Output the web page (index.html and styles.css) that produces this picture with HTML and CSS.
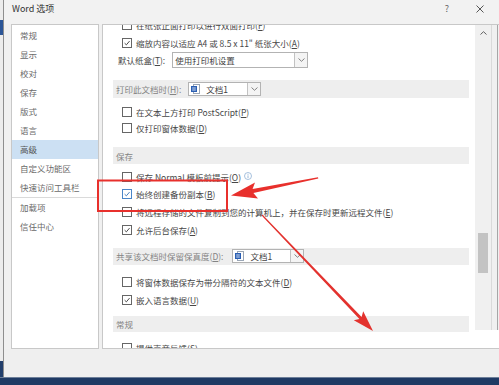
FILE: index.html
```html
<!DOCTYPE html>
<html lang="zh-CN">
<head>
<meta charset="utf-8">
<title>Word 选项</title>
<link rel="stylesheet" href="styles.css">
</head>
<body>
<div class="screen">
  <div class="top">
    <div class="desk-left"><div class="blue"></div><div class="blue2"></div></div>
    <div class="dialog">
      <div class="titlebar">
        <div class="title">Word 选项</div>
        <div class="ctrls">
          <div class="ctrl help">?</div>
          <div class="ctrl close">
            <svg width="8" height="8" viewBox="0 0 8 8"><path d="M0.5 0.5L7.5 7.5M7.5 0.5L0.5 7.5" stroke="#444" stroke-width="0.9" fill="none"/></svg>
          </div>
        </div>
      </div>
      <div class="panes">
        <div class="nav">
          <div class="nav-item">常规</div>
          <div class="nav-item">显示</div>
          <div class="nav-item">校对</div>
          <div class="nav-item">保存</div>
          <div class="nav-item">版式</div>
          <div class="nav-item">语言</div>
          <div class="nav-item active">高级</div>
          <div class="nav-item">自定义功能区</div>
          <div class="nav-item">快速访问工具栏</div>
          <div class="nav-sep"></div>
          <div class="nav-item">加载项</div>
          <div class="nav-item">信任中心</div>
        </div>
        <div class="main">
          <div class="content">
            <div class="scroll-inner">
              <div class="row r19"><span class="cb"></span><span>在纸张正面打印以进行双面打印(<u>F</u>)</span></div>
              <div class="row r17"><span class="cb on"><svg viewBox="0 0 10 10"><path d="M2 5.2L4.2 7.3L8.2 2.6" fill="none" stroke="#333" stroke-width="1.1"/></svg></span><span>缩放内容以适应 A4 或 8.5 x 11" 纸张大小(<u>A</u>)</span></div>
              <div class="row r17 labelrow"><span class="lbl">默认纸盒(<u>T</u>):</span>
                <span class="select wide"><span class="sel-text">使用打印机设置</span><span class="sel-btn"><svg width="7" height="4" viewBox="0 0 7 4"><path d="M0.5 0.5L3.5 3.3L6.5 0.5" fill="none" stroke="#777" stroke-width="0.9"/></svg></span></span>
              </div>

              <div class="band b1"><span class="band-text">打印此文档时(<u>H</u>):</span>
                <span class="select doc d1"><svg class="docicon" width="9" height="10" viewBox="0 0 9 10"><rect x="2.5" y="0.5" width="6" height="9" fill="#fff" stroke="#9aa6b6"/><rect x="0" y="2" width="6" height="6" fill="#2b5fb3"/><path d="M1.2 4h3.6M1.2 6h3.6" stroke="#fff" stroke-width="0.8"/></svg><span class="sel-text">文档1</span><span class="sel-btn"><svg width="7" height="4" viewBox="0 0 7 4"><path d="M0.5 0.5L3.5 3.3L6.5 0.5" fill="none" stroke="#777" stroke-width="0.9"/></svg></span></span>
              </div>
              <div class="rows g1">
                <div class="row r16"><span class="cb"></span><span>在文本上方打印 PostScript(<u>P</u>)</span></div>
                <div class="row r16"><span class="cb"></span><span>仅打印窗体数据(<u>D</u>)</span></div>
              </div>

              <div class="band b2"><span class="band-text">保存</span></div>
              <div class="rows g2">
                <div class="row r176"><span class="cb"></span><span>保存 Normal 模板前提示(<u>O</u>)</span><svg class="info" width="8" height="8" viewBox="0 0 8 8"><circle cx="4" cy="4" r="3.5" fill="none" stroke="#8fb0d4" stroke-width="0.8"/><path d="M4 3.4V6" stroke="#8fb0d4" stroke-width="0.9"/><circle cx="4" cy="2.2" r="0.5" fill="#8fb0d4"/></svg></div>
                <div class="row r176"><span class="cb on focus"><svg viewBox="0 0 10 10"><path d="M2 5.2L4.2 7.3L8.2 2.6" fill="none" stroke="#2f6fb6" stroke-width="1.1"/></svg></span><span>始终创建备份副本(<u>B</u>)</span></div>
                <div class="row r176"><span class="cb"></span><span>将远程存储的文件复制到您的计算机上，并在保存时更新远程文件(<u>E</u>)</span></div>
                <div class="row r176"><span class="cb on"><svg viewBox="0 0 10 10"><path d="M2 5.2L4.2 7.3L8.2 2.6" fill="none" stroke="#333" stroke-width="1.1"/></svg></span><span>允许后台保存(<u>A</u>)</span></div>
              </div>

              <div class="band b3"><span class="band-text">共享该文档时保留保真度(<u>D</u>):</span>
                <span class="select doc d3"><svg class="docicon" width="9" height="10" viewBox="0 0 9 10"><rect x="2.5" y="0.5" width="6" height="9" fill="#fff" stroke="#9aa6b6"/><rect x="0" y="2" width="6" height="6" fill="#2b5fb3"/><path d="M1.2 4h3.6M1.2 6h3.6" stroke="#fff" stroke-width="0.8"/></svg><span class="sel-text">文档1</span><span class="sel-btn"><svg width="7" height="4" viewBox="0 0 7 4"><path d="M0.5 0.5L3.5 3.3L6.5 0.5" fill="none" stroke="#777" stroke-width="0.9"/></svg></span></span>
              </div>
              <div class="rows g3">
                <div class="row r18"><span class="cb"></span><span>将窗体数据保存为带分隔符的文本文件(<u>D</u>)</span></div>
                <div class="row r18"><span class="cb on"><svg viewBox="0 0 10 10"><path d="M2 5.2L4.2 7.3L8.2 2.6" fill="none" stroke="#333" stroke-width="1.1"/></svg></span><span>嵌入语言数据(<u>U</u>)</span></div>
              </div>

              <div class="band b4"><span class="band-text">常规</span></div>
              <div class="rows g4">
                <div class="row r18"><span class="cb"></span><span>提供声音反馈(<u>S</u>)</span></div>
              </div>
            </div>
          </div>
          <div class="scrollbar">
            <div class="sb-up"><svg width="7" height="4" viewBox="0 0 7 4"><path d="M0.5 3.5L3.5 0.7L6.5 3.5" fill="none" stroke="#606060" stroke-width="1"/></svg></div>
            <div class="sb-thumb"></div>
          </div>
          <div class="edge"></div>
        </div>
      </div>
      <div class="footer"></div>
    </div>
  </div>
  <div class="taskbar"></div>
</div>

<svg class="annot" width="499" height="385" viewBox="0 0 499 385">
  <rect x="98" y="180.5" width="129" height="30.5" fill="none" stroke="#e8302c" stroke-width="2"/>
  <polygon fill="#e8302c" points="231,195.5 255,182.6 252.6,189 318,177.3 318.3,178.6 253.4,193 258,198.6"/>
  <polygon fill="#e3322e" points="262.4,214.6 361.6,317 363.2,311.3 373,331 353.8,320.3 359.4,319 261.6,215.4"/>
</svg>
</body>
</html>
```

FILE: styles.css
```css
* { box-sizing: border-box; }
html, body { margin: 0; padding: 0; }
body {
  width: 499px;
  height: 385px;
  overflow: hidden;
  position: relative;
  background: #f0f0f0;
  font-family: "Noto Sans CJK SC", "Noto Sans", sans-serif;
  font-size: 8.5px;
  color: #474747;
}
u { text-decoration: underline; text-underline-offset: 1px; }

.screen { display: flex; flex-direction: column; height: 385px; }
.top { display: flex; height: 377px; }

.desk-left { width: 3px; background: #ececec; display: flex; flex-direction: column; }
.desk-left .blue { margin-top: 20px; height: 15px; background: #2b5597; }
.desk-left .blue2 { margin-top: auto; height: 16px; background: #223f6c; }

.dialog {
  flex: 1;
  border-left: 1px solid #8e8e8e;
  background: #f0f0f0;
  display: flex;
  flex-direction: column;
}

.titlebar {
  height: 24px;
  display: flex;
  align-items: flex-start;
  padding: 3px 8px 0 8px;
  background: #f2f2f2;
}
.title { font-size: 9px; line-height: 12px; color: #333; }
.ctrls { margin-left: auto; display: flex; gap: 11px; }
.ctrl { width: 22px; height: 12px; display: flex; align-items: center; justify-content: center; }
.help { font-size: 9px; line-height: 12px; color: #666; }

.panes { display: flex; gap: 3px; padding-left: 7px; height: 325px; }

.nav {
  width: 88px;
  background: #fff;
  border: 1px solid #c8c8c8;
  padding-top: 1px;
}
.nav-item { height: 19px; line-height: 19px; padding-left: 8px; color: #6a6a6a; white-space: nowrap; }
.nav-item.active { background: #cce0f3; color: #555; }
.nav-sep { height: 1px; background: #dadada; }

.main {
  flex: 1;
  background: #fff;
  border: 1px solid #c8c8c8;
  border-right: none;
  display: flex;
  align-items: flex-start;
  overflow: hidden;
}
.content { width: 372px; height: 100%; overflow: hidden; flex: none; }
.scroll-inner { margin-top: -10px; }

.row { display: flex; align-items: center; padding-left: 19px; white-space: nowrap; }
.r16 { height: 16px; }
.r17 { height: 17px; }
.r176 { height: 17.6px; }
.r18 { height: 18px; }
.r19 { height: 19px; }
.labelrow { padding-left: 15px; }
.lbl { margin-right: 7px; }

.cb {
  width: 10px;
  height: 10px;
  border: 1px solid #666;
  background: #fff;
  margin-right: 4px;
  flex: none;
  display: flex;
}
.cb svg { width: 8px; height: 8px; }
.cb.focus { border-color: #4a86c8; }

.info { margin-left: 3px; margin-top: -2px; }

.band {
  margin-left: 10px;
  margin-right: 6px;
  background: #eeeeee;
  display: flex;
  align-items: center;
  padding-left: 3px;
  color: #848484;
  white-space: nowrap;
}
.b1 { height: 18px; margin-top: 12px; }
.b2 { height: 17px; margin-top: 11px; }
.b3 { height: 17px; margin-top: 9.6px; }
.b4 { height: 16px; margin-top: 7px; }
.g1 { margin-top: 6px; }
.g2 { margin-top: 4px; }
.g3 { margin-top: 8px; }
.g4 { margin-top: 7px; }

.select {
  display: flex;
  align-items: center;
  background: #fff;
  border: 1px solid #b3b3b3;
  color: #444;
}
.select.wide { width: 136px; height: 16px; padding-left: 2px; }
.sel-text { flex: 1; }
.sel-btn {
  width: 13px;
  align-self: stretch;
  border-left: 1px solid #c2c2c2;
  background: #f4f4f4;
  display: flex;
  align-items: center;
  justify-content: center;
}
.select.doc { height: 14px; padding-left: 2px; }
.d1 { width: 73px; margin-left: 7px; }
.d3 { width: 72px; margin-left: 9px; }
.docicon { margin-right: 6px; flex: none; }

.scrollbar {
  width: 16px;
  height: 305px;
  background: #f0f0f0;
  flex: none;
  display: flex;
  flex-direction: column;
  align-items: center;
}
.sb-up { height: 16px; display: flex; align-items: center; justify-content: center; }
.sb-thumb { width: 10px; height: 40px; margin-top: 192px; background: #c3c3c3; }

.edge {
  width: 8px;
  height: 305px;
  flex: none;
  border-left: 1px solid #dadada;
  background: linear-gradient(to right, #f0f0f0 0 5px, #a6a6a6 5px 6px, #f0f0f0 6px);
}

.footer { height: 28px; background: #efefef; }
.taskbar { height: 8px; background: #1f3a64; border-top: 1px solid #6d7f99; }

.annot { position: absolute; left: 0; top: 0; pointer-events: none; }
```
